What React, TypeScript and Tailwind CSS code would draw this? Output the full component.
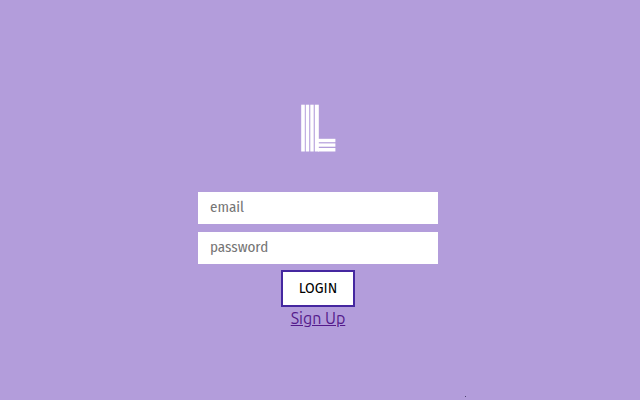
import React, { useState } from 'react';

// Striped "L" mark: four vertical bars, three bars for the foot
function Logo() {
    return (
        <svg width="36" height="48" viewBox="0 0 36 48" fill="#ffffff" role="img" aria-label="Logo">
            <rect x="1.2" y="0.7" width="3.6" height="46.8" />
            <rect x="5.8" y="0.7" width="3.4" height="46.8" />
            <rect x="10.3" y="0.7" width="3.4" height="46.8" />
            <rect x="14.8" y="0.7" width="4" height="46.8" />
            <rect x="18" y="34.8" width="17.4" height="3.4" />
            <rect x="18" y="39.4" width="17.4" height="3.3" />
            <rect x="18" y="44" width="17.4" height="3.5" />
        </svg>
    );
}

interface FieldProps {
    type: string;
    name: string;
    value: string;
    onChange: (value: string) => void;
}

function Field({ type, name, value, onChange }: FieldProps) {
    return (
        <input
            type={type}
            name={name}
            aria-label={name}
            placeholder={name}
            value={value}
            onChange={(e) => onChange(e.target.value)}
            className="h-8 w-full bg-white px-3 pb-0.5 font-['Fira_Sans_Condensed','Roboto',sans-serif] text-[15px] text-black placeholder:text-[#757575] outline-none"
        />
    );
}

export default function App() {
    const [email, setEmail] = useState('');
    const [password, setPassword] = useState('');

    return (
        <main className="relative flex min-h-screen flex-col items-center bg-[#b39ddb] pt-26 pr-1 font-['Fira_Sans','Roboto',sans-serif]">
            <Logo />
            <form
                onSubmit={(e) => e.preventDefault()}
                className="mt-10 flex w-full max-w-60 flex-col items-center gap-2"
            >
                <Field type="email" name="email" value={email} onChange={setEmail} />
                <Field type="password" name="password" value={password} onChange={setPassword} />
                <button
                    type="submit"
                    className="-mt-0.5 border-2 border-[#4527a0] bg-white px-4 py-2 text-sm leading-[17px] text-black"
                >
                    LOGIN
                </button>
            </form>
            <a href="#signup" className="font-['Ubuntu','Noto_Sans',sans-serif] text-base leading-[22px] text-[#551a8b] underline">
                Sign Up
            </a>
            <span aria-hidden="true" className="absolute bottom-[3px] left-[465px] size-px bg-[#4f4470]" />
        </main>
    );
}
